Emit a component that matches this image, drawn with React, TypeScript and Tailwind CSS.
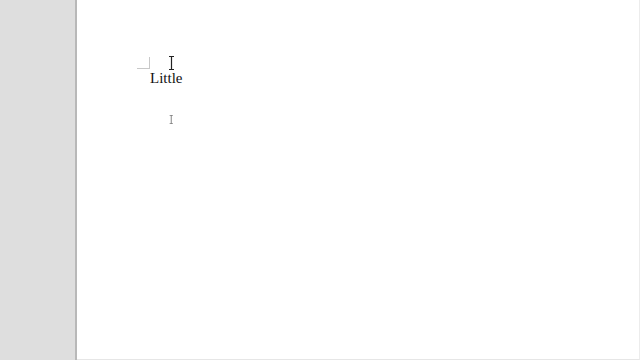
import React from "react";

function IBeam({ size = 14 }: { size?: number }) {
  return (
    <svg width={size * 0.5} height={size} viewBox="0 0 7 14" aria-hidden="true">
      <path d="M1 0.5h5M3.5 0.5v13M1 13.5h5" stroke="#222" strokeWidth="1.2" fill="none" />
    </svg>
  );
}

export default function App() {
  return (
    <div className="flex w-[640px] h-[360px] overflow-hidden bg-[#dedede]">
      {/* Left gray margin */}
      <div className="w-[77px] shrink-0 bg-[#dedede] border-r-2 border-[#b8b8b8]" />

      {/* Page */}
      <div className="relative flex-1 bg-white border-r border-[#ececec] border-b border-b-[#e6e6e6]">
        {/* corner mark */}
        <div className="absolute left-[60px] top-[57px] w-[13px] h-[12px] border-r border-b border-[#c8c8c8]" />

        <div className="pl-[73px] pt-[69px]">
          <p className="text-[15px] leading-[18px] text-[#111] font-['Liberation_Serif',serif]">Little</p>
        </div>

        {/* mouse I-beam cursor */}
        <div className="absolute left-[91px] top-[56px]">
          <IBeam size={14} />
        </div>
        <div className="absolute left-[92px] top-[115px] opacity-70">
          <IBeam size={9} />
        </div>
      </div>
    </div>
  );
}
